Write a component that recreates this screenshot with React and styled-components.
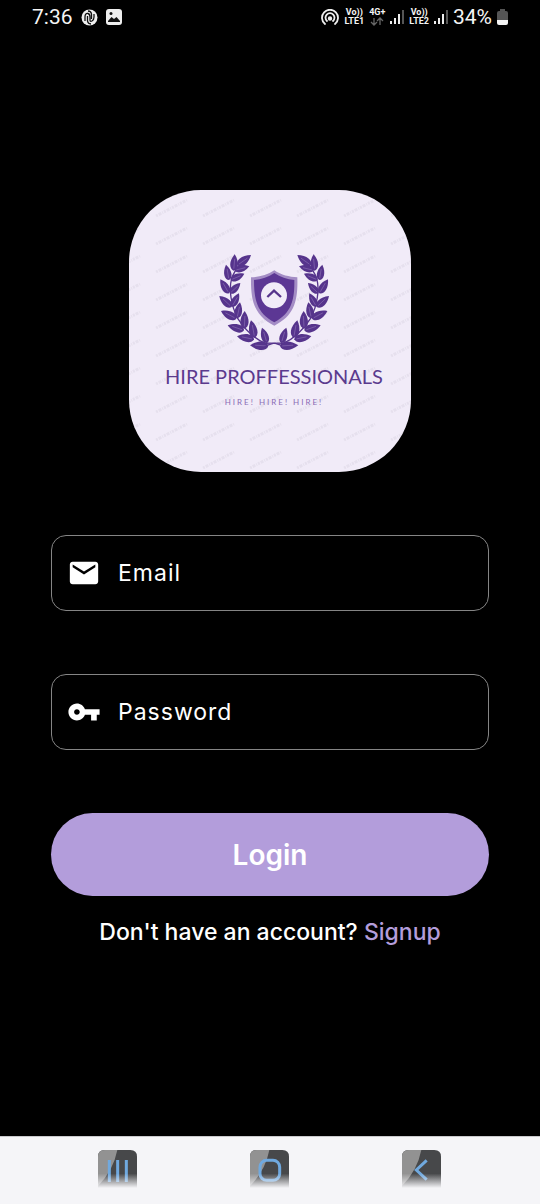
import React from 'react';
import styled, { createGlobalStyle } from 'styled-components';

const GlobalStyle = createGlobalStyle`
  *, *::before, *::after { box-sizing: border-box; }
  body { margin: 0; background: #000; }
  button, input { font-family: inherit; }
`;

const Screen = styled.div`
  display: flex;
  flex-direction: column;
  min-height: 100vh;
  background: #000;
  color: #fff;
  font-family: Inter, Roboto, sans-serif;
`;

const StatusBar = styled.header`
  display: flex;
  align-items: center;
  justify-content: space-between;
  height: 34px;
  padding: 0 32px;
  font-family: Roboto, sans-serif;
  font-size: 21px;
  line-height: 24px;
  color: #f4f4f4;
`;

const StatusGroup = styled.div`
  display: flex;
  align-items: center;
  gap: ${({ $gap }) => $gap}px;
`;

const Carrier = styled.span`
  display: flex;
  flex-direction: column;
  align-items: center;
  font-size: 9px;
  font-weight: 700;
  line-height: 9px;
`;

const Main = styled.main`
  flex: 1;
  display: flex;
  flex-direction: column;
  align-items: center;
  padding: 156px 51px 48px;
`;

const LogoCard = styled.section`
  position: relative;
  isolation: isolate;
  display: flex;
  flex-direction: column;
  align-items: center;
  width: 282px;
  height: 282px;
  padding-top: 50px;
  padding-left: 8px;
  border-radius: 72px;
  overflow: hidden;
  background: #f1ebf8;
  color: #5b3a8e;
  font-family: Lato, sans-serif;
`;

const Watermark = styled.svg`
  position: absolute;
  z-index: -1;
  inset: 0;
  width: 100%;
  height: 100%;
`;

const Brand = styled.h1`
  margin: 2px 0 0;
  font-size: 20px;
  font-weight: 400;
  line-height: 28px;
  white-space: nowrap;
`;

const Tagline = styled.p`
  margin: 6px 0 0;
  font-size: 8px;
  line-height: 12px;
  letter-spacing: 2px;
  color: #8a6bb5;
`;

const Form = styled.form`
  display: flex;
  flex-direction: column;
  gap: 63px;
  width: 100%;
  margin-top: 63px;
`;

const Field = styled.label`
  display: flex;
  align-items: center;
  gap: 17px;
  height: 76px;
  padding: 0 15px;
  border: 1px solid #858585;
  border-radius: 15px;
`;

const FieldInput = styled.input`
  flex: 1;
  min-width: 0;
  padding: 0;
  border: 0;
  outline: 0;
  background: transparent;
  color: #fff;
  font-size: 23px;
  line-height: 32px;
  letter-spacing: 1px;
  &::placeholder { color: #fff; opacity: 1; }
`;

const LoginButton = styled.button`
  height: 83px;
  border: 0;
  border-radius: 42px;
  background: #b39ddb;
  color: #fff;
  font-size: 28px;
  font-weight: 600;
  line-height: 36px;
  cursor: pointer;
`;

const Prompt = styled.p`
  margin: 20px 0 0;
  font-size: 23px;
  font-weight: 500;
  line-height: 32px;
  text-align: center;
  white-space: nowrap;
`;

const SignupLink = styled.a`
  color: #b39ddb;
  text-decoration: none;
`;

const NavBar = styled.nav`
  display: grid;
  grid-template-columns: repeat(3, 1fr);
  justify-items: center;
  align-items: start;
  height: 68px;
  padding: 13px 43px 0 42px;
  border-top: 1px solid #c9c9cc;
  background: #f5f5f8;
`;

const NavButton = styled.button`
  display: block;
  width: 39px;
  height: 38px;
  padding: 0;
  border: 0;
  background: transparent;
  cursor: pointer;
`;

/* Leaves of the left branch, each as [baseX, baseY, tipX, tipY]. */
const LEAVES = [
  [86, 92, 89, 43], [97, 76, 138, 45], [89, 91, 133, 79],
  [72, 120, 63, 74], [77, 120, 118, 101],
  [72, 160, 46, 118], [75, 160, 106, 129],
  [80, 201, 43, 168], [81, 200, 102, 160],
  [94, 236, 48, 213], [96, 235, 105, 187],
  [117, 271, 68, 256], [118, 266, 119, 213],
  [147, 298, 96, 289], [149, 293, 138, 241],
  [190, 318, 135, 316], [186, 309, 171, 263],
];

function Leaf({ points: [bx, by, tx, ty] }) {
  const dx = tx - bx;
  const dy = ty - by;
  const at = (along, side) =>
    `${(bx + dx * along - dy * side).toFixed(1)} ${(by + dy * along + dx * side).toFixed(1)}`;
  return (
    <g>
      <path
        d={`M${bx} ${by}C${at(0.08, 0.28)} ${at(0.55, 0.34)} ${tx} ${ty}C${at(0.55, -0.34)} ${at(0.08, -0.28)} ${bx} ${by}Z`}
        fill="#56348c"
      />
      <path d={`M${at(0.12, 0)}L${at(0.72, 0.02)}`} stroke="#8a6db3" strokeWidth="2" />
    </g>
  );
}

function Branch() {
  return (
    <g>
      <path
        d="M240 325C220 306 197 309 181 310C146 296 116 263 96 232C80 198 70 150 80 116C85 97 96 84 112 66"
        fill="none" stroke="#56348c" strokeWidth="4" strokeLinecap="round"
      />
      {LEAVES.map((points) => <Leaf key={points.join()} points={points} />)}
    </g>
  );
}

function Emblem() {
  return (
    <svg width="140" height="120" viewBox="-3 0 420 360" aria-hidden="true">
      <Branch />
      <g transform="translate(415 0) scale(-1 1)"><Branch /></g>
      <path d="M208 91C187 105 164 111 138 112C137 180 146 226 208 257C270 226 279 180 277 112C252 111 229 105 208 91Z" fill="#a48dc5" />
      <path d="M208 99C190 112 170 118 147 120C147 177 155 219 208 247C261 219 269 177 268 120C246 118 226 112 208 99Z" fill="#5c3794" />
      <circle cx="207" cy="166" r="39" fill="#f1ebf8" />
      <path d="M187 171L207 152L228 171" fill="none" stroke="#56348c" strokeWidth="7" />
    </svg>
  );
}

function WatermarkPattern() {
  return (
    <Watermark aria-hidden="true">
      <defs>
        <pattern id="mark" x="19" y="4" width="47" height="28" patternUnits="userSpaceOnUse">
          <path d="M8 22L39 6" stroke="#d9d3e1" strokeWidth="3" strokeDasharray="2 1 3 1 1 1" opacity="0.45" />
        </pattern>
      </defs>
      <rect width="100%" height="100%" fill="url(#mark)" />
    </Watermark>
  );
}

function Signal() {
  return (
    <svg width="14" height="16" viewBox="0 0 14 16" aria-hidden="true">
      <path d="M1 12V15M5 9V15M9 5V15" stroke="#eee" strokeWidth="2" />
      <path d="M13 1V15" stroke="#555" strokeWidth="2" />
    </svg>
  );
}

function MaterialIcon({ path }) {
  return (
    <svg width="34" height="34" viewBox="0 0 24 24" fill="#fff" aria-hidden="true">
      <path d={path} />
    </svg>
  );
}

const MAIL = 'M20 4H4c-1.1 0-1.99.9-1.99 2L2 18c0 1.1.9 2 2 2h16c1.1 0 2-.9 2-2V6c0-1.1-.9-2-2-2zm0 4l-8 5-8-5V6l8 5 8-5v2z';
const KEY = 'M12.65 10C11.83 7.67 9.61 6 7 6c-3.31 0-6 2.69-6 6s2.69 6 6 6c2.61 0 4.83-1.67 5.65-4H17v4h4v-4h2v-4H12.65zM7 14c-1.1 0-2-.9-2-2s.9-2 2-2 2 .9 2 2-.9 2-2 2z';

function NavIcon({ id, children }) {
  return (
    <svg width="39" height="38" viewBox="0 0 117 114" aria-hidden="true">
      <defs>
        <linearGradient id={`fade-${id}`} x1="0" y1="0" x2="0" y2="1">
          <stop offset="0.62" stopColor="#f5f5f8" stopOpacity="0" />
          <stop offset="1" stopColor="#f5f5f8" />
        </linearGradient>
      </defs>
      <path d="M0 114V20Q0 0 20 0H97Q117 0 117 20V114Z" fill="#47484a" />
      <path d="M0 114V20Q0 0 20 0H58Q46 62 0 108Z" fill="#929292" />
      <g fill="none" stroke="#70a9df" strokeWidth="9">{children}</g>
      <rect width="117" height="114" fill={`url(#fade-${id})`} />
    </svg>
  );
}

export default function App() {
  return (
    <Screen>
      <GlobalStyle />
      <StatusBar>
        <StatusGroup $gap={8}>
          <span>7:36</span>
          <svg width="17" height="17" viewBox="0 0 17 17" aria-hidden="true">
            <circle cx="8.5" cy="8.5" r="8" fill="#eee" />
            <path d="M4 12V8Q4 4 7 4.500Q9 5 9 8V11Q9 13 11 12Q13 11 13 8V5M6.500 7V12Q7 15 10 15M10.500 10V5Q10 2 7 2" fill="none" stroke="#111" strokeWidth="1.300" />
          </svg>
          <svg width="16" height="16" viewBox="0 0 16 16" aria-hidden="true">
            <rect width="16" height="16" rx="3" fill="#eee" />
            <path d="M2 12L5.500 8L8 10L10.500 8L14 12V13H2Z" fill="#111" />
            <circle cx="5" cy="4.500" r="1.500" fill="#111" />
          </svg>
        </StatusGroup>
        <StatusGroup $gap={5}>
          <svg width="18" height="17" viewBox="0 0 18 17" fill="none" stroke="#eee" strokeWidth="1.800" strokeLinecap="round" aria-hidden="true">
            <path d="M4 15A8 8 0 1 1 14 15M6 12A4.500 4.500 0 1 1 12 12" />
            <circle cx="9" cy="9.500" r="1.300" fill="#eee" />
          </svg>
          <Carrier><span>Vo))</span><span>LTE1</span></Carrier>
          <Carrier>
            <span>4G+</span>
            <svg width="14" height="9" viewBox="0 0 14 9" fill="none" stroke="#666" strokeWidth="1.300" aria-hidden="true">
              <path d="M4 1V8M1 5L4 8L7 5M10 8V1M7 4L10 1L13 4" />
            </svg>
          </Carrier>
          <Signal />
          <Carrier><span>Vo))</span><span>LTE2</span></Carrier>
          <Signal />
          <span>34%</span>
          <svg width="11" height="16" viewBox="0 0 11 16" aria-hidden="true">
            <path d="M3 2V0H8V2H9Q11 2 11 4V11H0V4Q0 2 2 2Z" fill="#555" />
            <path d="M0 11H11V14Q11 16 9 16H2Q0 16 0 14Z" fill="#f4f4f4" />
          </svg>
        </StatusGroup>
      </StatusBar>
      <Main>
        <LogoCard>
          <WatermarkPattern />
          <Emblem />
          <Brand>HIRE PROFFESSIONALS</Brand>
          <Tagline>HIRE! HIRE! HIRE!</Tagline>
        </LogoCard>
        <Form onSubmit={(event) => event.preventDefault()}>
          <Field>
            <MaterialIcon path={MAIL} />
            <FieldInput type="email" placeholder="Email" aria-label="Email" />
          </Field>
          <Field>
            <MaterialIcon path={KEY} />
            <FieldInput type="password" placeholder="Password" aria-label="Password" />
          </Field>
          <LoginButton type="submit">Login</LoginButton>
        </Form>
        <Prompt>
          Don't have an account? <SignupLink href="#signup">Signup</SignupLink>
        </Prompt>
      </Main>
      <NavBar aria-label="System">
        <NavButton type="button" aria-label="Recent apps">
          <NavIcon id="recent"><path d="M34 30V96M59 30V96M85 30V96" /></NavIcon>
        </NavButton>
        <NavButton type="button" aria-label="Home">
          <NavIcon id="home"><rect x="30" y="31" width="59" height="60" rx="20" /></NavIcon>
        </NavButton>
        <NavButton type="button" aria-label="Back">
          <NavIcon id="back"><path d="M74 31L43 60L74 89" /></NavIcon>
        </NavButton>
      </NavBar>
    </Screen>
  );
}
